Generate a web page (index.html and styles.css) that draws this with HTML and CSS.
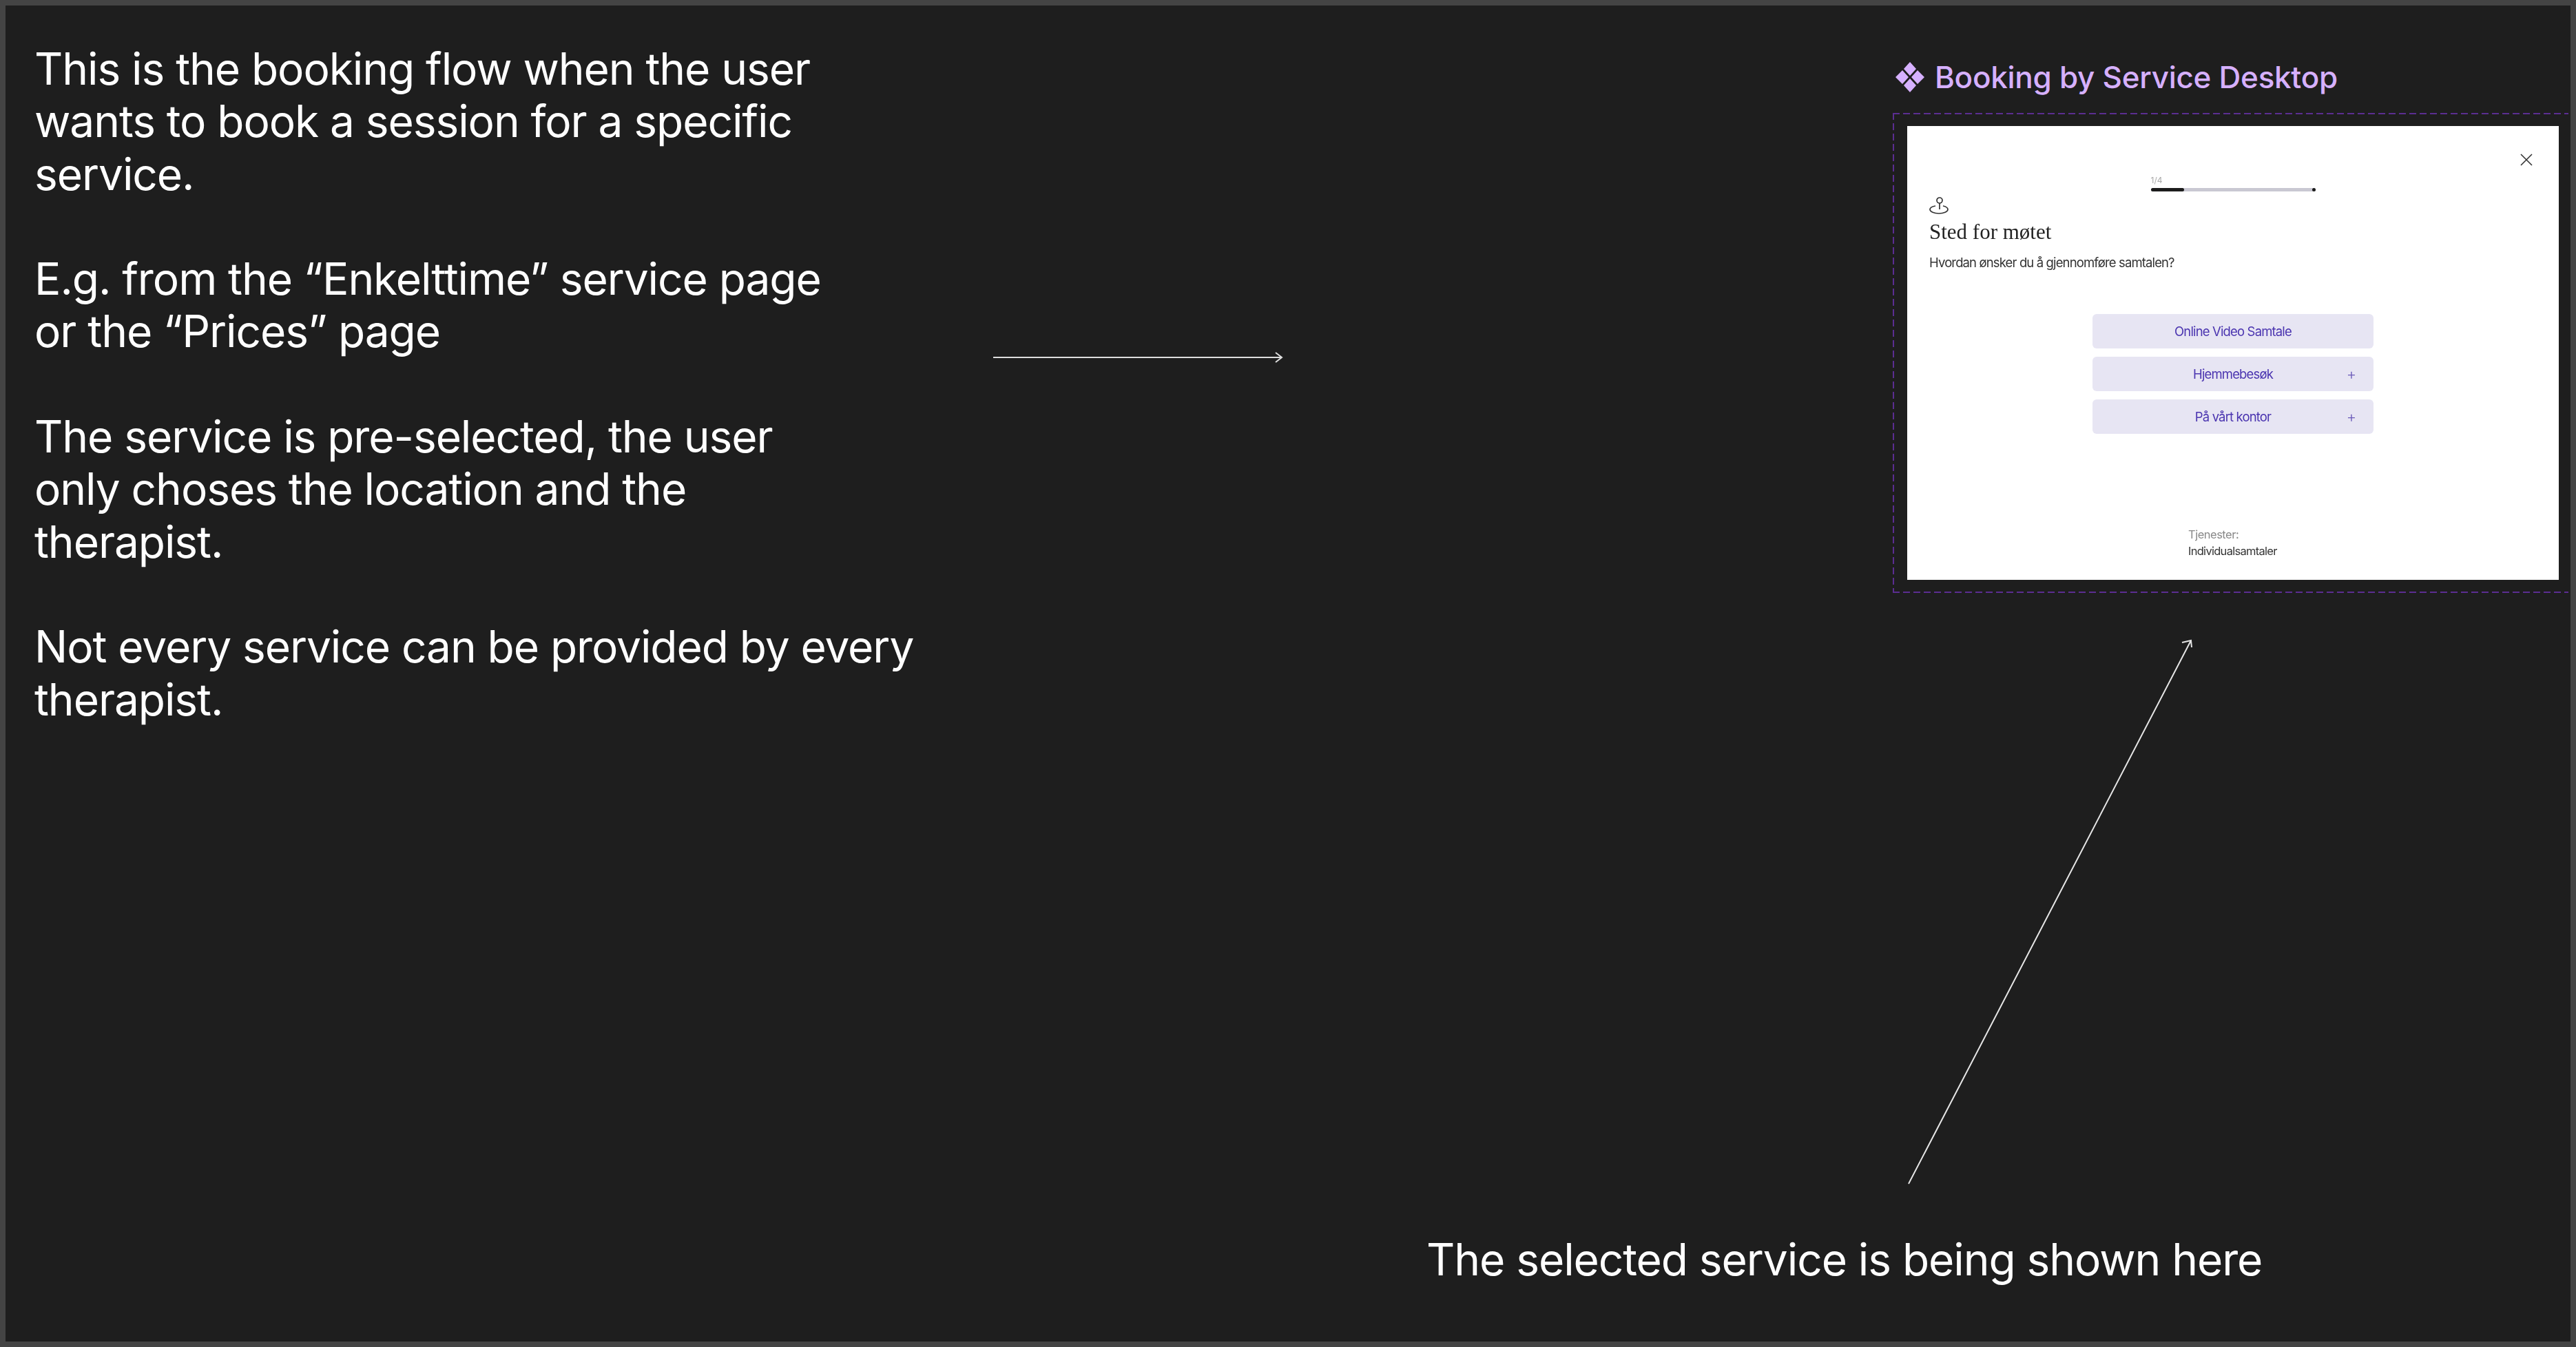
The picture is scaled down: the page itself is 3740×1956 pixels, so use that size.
FILE: index.html
```html
<!DOCTYPE html>
<html lang="en">
<head>
<meta charset="utf-8">
<title>Booking by Service Desktop</title>
<link rel="stylesheet" href="styles.css">
</head>
<body>
<main class="canvas">
  <section class="note">
    <p>This is the booking flow when the user<br>wants to book a session for a specific<br>service.</p>
    <p>E.g. from the “Enkelttime” service page<br>or the “Prices” page</p>
    <p>The service is pre-selected, the user<br>only choses the location and the<br>therapist.</p>
    <p>Not every service can be provided by every<br>therapist.</p>
  </section>

  <svg class="arrow arrow-right" width="424" height="16" viewBox="0 0 424 16" fill="none" aria-hidden="true">
    <path d="M0 8H419M410 1L419 8L410 15" stroke="#dedede" stroke-width="2"/>
  </svg>

  <section class="component">
    <h2 class="component-name">
      <svg class="diamonds" width="42" height="44" viewBox="0 0 42 44" aria-hidden="true">
        <path d="M21 0L30 10L21 20L12 10ZM10 12L19 22L10 32L0 22ZM32 12L42 22L32 32L23 22ZM21 24L30 34L21 44L12 34Z" fill="#d6b0ff"/>
      </svg>
      Booking by Service Desktop
    </h2>
    <div class="dashed">
      <div class="modal">
        <svg class="close" width="18" height="18" viewBox="0 0 18 18" fill="none" aria-hidden="true">
          <path d="M1 1L17 17M17 1L1 17" stroke="#333" stroke-width="1.6"/>
        </svg>
        <div class="progress">
          <span class="progress-label">1/4</span>
          <div class="track"><div class="track-fill"></div><div class="track-end"></div></div>
        </div>
        <div class="intro">
          <svg class="pin" width="28" height="25" viewBox="0 0 28 25" fill="none" aria-hidden="true">
            <circle cx="15" cy="5" r="4" stroke="#333" stroke-width="1.7"/>
            <path d="M15 9V18M9 13C4 14 1 16 1 18C1 21.5 7 24 14 24C21 24 27 21.5 27 18C27 16 24 14 20 13" stroke="#333" stroke-width="1.7"/>
          </svg>
          <h1 class="modal-title">Sted for møtet</h1>
          <p class="modal-sub">Hvordan ønsker du å gjennomføre samtalen?</p>
        </div>
        <div class="options">
          <div class="option">Online Video Samtale</div>
          <div class="option">Hjemmebesøk<span class="plus">+</span></div>
          <div class="option">På vårt kontor<span class="plus">+</span></div>
        </div>
        <div class="services">
          <div class="services-label">Tjenester:</div>
          <div class="services-value">Individualsamtaler</div>
        </div>
      </div>
    </div>
  </section>

  <svg class="arrow arrow-up" width="424" height="804" viewBox="0 0 424 804" fill="none" aria-hidden="true">
    <path d="M2 793L412 4M399 7L412 4L413 14" stroke="#e6e6e6" stroke-width="2"/>
  </svg>

  <p class="caption">The selected service is being shown here</p>
</main>
</body>
</html>
```

FILE: styles.css
```css
* { box-sizing: border-box; }
html, body { margin: 0; height: 100%; background: #444; }
h1, h2, p { margin: 0; font-weight: 400; }

.canvas {
  position: relative;
  width: 3724px;
  height: 1940px;
  margin: 8px 0 0 8px;
  background: #1e1e1e;
  overflow: hidden;
  font-family: Inter, "Liberation Sans", sans-serif;
  color: #fff;
}

.note {
  position: absolute;
  left: 42px;
  top: 54px;
  display: flex;
  flex-direction: column;
  gap: 76.300px;
  font-size: 64px;
  line-height: 76.300px;
  letter-spacing: -1.070px;
}

.caption {
  position: absolute;
  left: 2063px;
  top: 1783px;
  font-size: 64px;
  line-height: 76.300px;
  letter-spacing: -1.070px;
  white-space: nowrap;
}

.arrow { position: absolute; display: block; }
.arrow-right { left: 1434px; top: 503px; }
.arrow-up { left: 2761px; top: 918px; }

.component {
  position: absolute;
  left: 2740px;
  top: 78px;
  width: 981px;
}

.component-name {
  display: flex;
  align-items: center;
  gap: 15px;
  height: 50px;
  margin-left: 4px;
  padding-top: 1px;
  font-size: 44px;
  line-height: 50px;
  font-weight: 500;
  letter-spacing: -0.280px;
  color: #d6b0ff;
  white-space: nowrap;
}

.dashed {
  margin-top: 28px;
  height: 697px;
  padding: 19px 0 0 21px;
  background:
    repeating-linear-gradient(90deg, #5b2d91 0 10px, transparent 10px 15px) left top / 100% 2px no-repeat,
    repeating-linear-gradient(90deg, #5b2d91 0 10px, transparent 10px 15px) left bottom / 100% 2px no-repeat,
    repeating-linear-gradient(180deg, #5b2d91 0 10px, transparent 10px 15px) left top / 2px 100% no-repeat;
}

.modal {
  position: relative;
  width: 946px;
  height: 659px;
  background: #fff;
  display: flex;
  flex-direction: column;
  align-items: center;
  font-family: Inter, "Liberation Sans", sans-serif;
  filter: blur(0.5px);
}

.close { position: absolute; right: 38px; top: 40px; }

.progress {
  width: 239px;
  margin-top: 71px;
  display: flex;
  flex-direction: column;
  gap: 3px;
}

.progress-label {
  font-size: 12px;
  line-height: 16px;
  color: #aaa;
}

.track {
  position: relative;
  height: 5px;
  border-radius: 3px;
  background: #c9c8d2;
}

.track-fill {
  width: 48px;
  height: 100%;
  border-radius: 3px;
  background: #1c1c1c;
}

.track-end {
  position: absolute;
  right: 0;
  top: 0;
  width: 5px;
  height: 5px;
  border-radius: 50%;
  background: #1c1c1c;
}

.intro {
  align-self: flex-start;
  margin: 8px 0 0 32px;
  display: flex;
  flex-direction: column;
}

.modal-title {
  margin-top: 6px;
  font-family: "Liberation Serif", serif;
  font-size: 31px;
  line-height: 40px;
  color: #222;
}

.modal-sub {
  margin-top: 12px;
  font-size: 18.500px;
  line-height: 24px;
  letter-spacing: -0.870px;
  color: #333;
  white-space: nowrap;
}

.options {
  margin-top: 63px;
  width: 408px;
  display: flex;
  flex-direction: column;
  gap: 12px;
}

.option {
  position: relative;
  height: 50px;
  border-radius: 6px;
  background: #e7e5f3;
  display: flex;
  align-items: center;
  justify-content: center;
  font-size: 18.500px;
  letter-spacing: -0.850px;
  color: #4b35b0;
}

.plus {
  position: absolute;
  right: 25px;
  top: 50%;
  transform: translateY(-50%);
  font-size: 22px;
  font-weight: 300;
  letter-spacing: 0;
  line-height: 1;
  color: #6a5ab8;
}

.services {
  margin-top: 134px;
  align-self: flex-start;
  margin-left: 408px;
  font-size: 16.500px;
  line-height: 24px;
  letter-spacing: -0.500px;
  white-space: nowrap;
}

.services-label { color: #888; }
.services-value { color: #333; letter-spacing: -0.720px; }
```
